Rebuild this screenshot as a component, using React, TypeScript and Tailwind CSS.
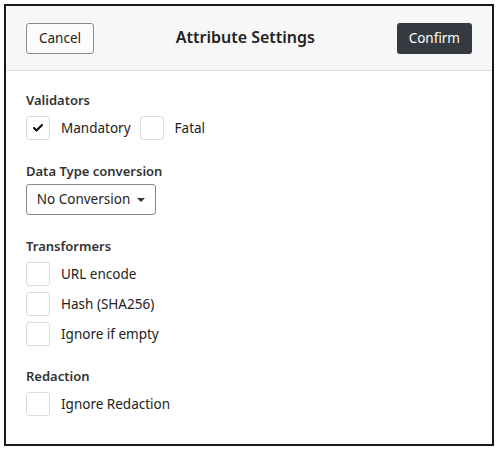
import { Check } from "lucide-react";

function Box({ checked = false }: { checked?: boolean }) {
  return (
    <div className="w-6 h-6 shrink-0 rounded-[3px] border border-[#dcdcdc] bg-white flex items-center justify-center">
      {checked && <Check className="w-3 h-3 text-black" strokeWidth={4} />}
    </div>
  );
}

function Option({ label, checked = false }: { label: string; checked?: boolean }) {
  return (
    <label className="flex items-center gap-[11px]">
      <Box checked={checked} />
      <span>{label}</span>
    </label>
  );
}

function Heading({ children, tight = false }: { children: string; tight?: boolean }) {
  return (
    <div className={"text-[13px] leading-[16px] font-semibold text-[#333] " + (tight ? "mb-[5px]" : "mb-[8px]")}>
      {children}
    </div>
  );
}

export default function App() {
  return (
    <div
      className="w-[499px] h-[451px] bg-white pt-1 pl-1"
      style={{ fontFamily: '"Noto Sans", "Open Sans", sans-serif' }}
    >
      <div className="w-[490px] h-[442px] border-2 border-[#1a1a1a] flex flex-col text-[13.5px] text-[#222]">
        <div className="h-[65px] bg-[#f7f7f7] border-b border-[#dedede] flex items-center justify-between px-[20px]">
          <button className="h-[31px] px-3 rounded-[3px] border border-[#8a8a8a] bg-[#fcfcfc] text-[13.5px] text-[#222]">
            Cancel
          </button>
          <div className="text-[16px] font-semibold text-[#222] -mt-[3px]">Attribute Settings</div>
          <button className="h-[31px] px-3 rounded-[3px] bg-[#343a40] text-white text-[13.5px]">
            Confirm
          </button>
        </div>
        <div className="px-[20px] pt-[21px] flex flex-col">
          <Heading>Validators</Heading>
          <div className="flex items-center gap-[9px]">
            <Option label="Mandatory" checked />
            <Option label="Fatal" />
          </div>
          <div className="mt-[23px]">
            <Heading tight>Data Type conversion</Heading>
          </div>
          <button className="w-[130px] h-[31px] rounded-[3px] border border-[#8a8a8a] bg-white flex items-center justify-center gap-[7px] text-[13.5px]">
            No Conversion
            <span className="w-0 h-0 border-l-[4px] border-r-[4px] border-t-[4px] border-l-transparent border-r-transparent border-t-[#333]" />
          </button>
          <div className="mt-[23px]">
            <Heading>Transformers</Heading>
          </div>
          <div className="flex flex-col gap-[6px]">
            <Option label="URL encode" />
            <Option label="Hash (SHA256)" />
            <Option label="Ignore if empty" />
          </div>
          <div className="mt-[22px]">
            <Heading>Redaction</Heading>
          </div>
          <Option label="Ignore Redaction" />
        </div>
      </div>
    </div>
  );
}
